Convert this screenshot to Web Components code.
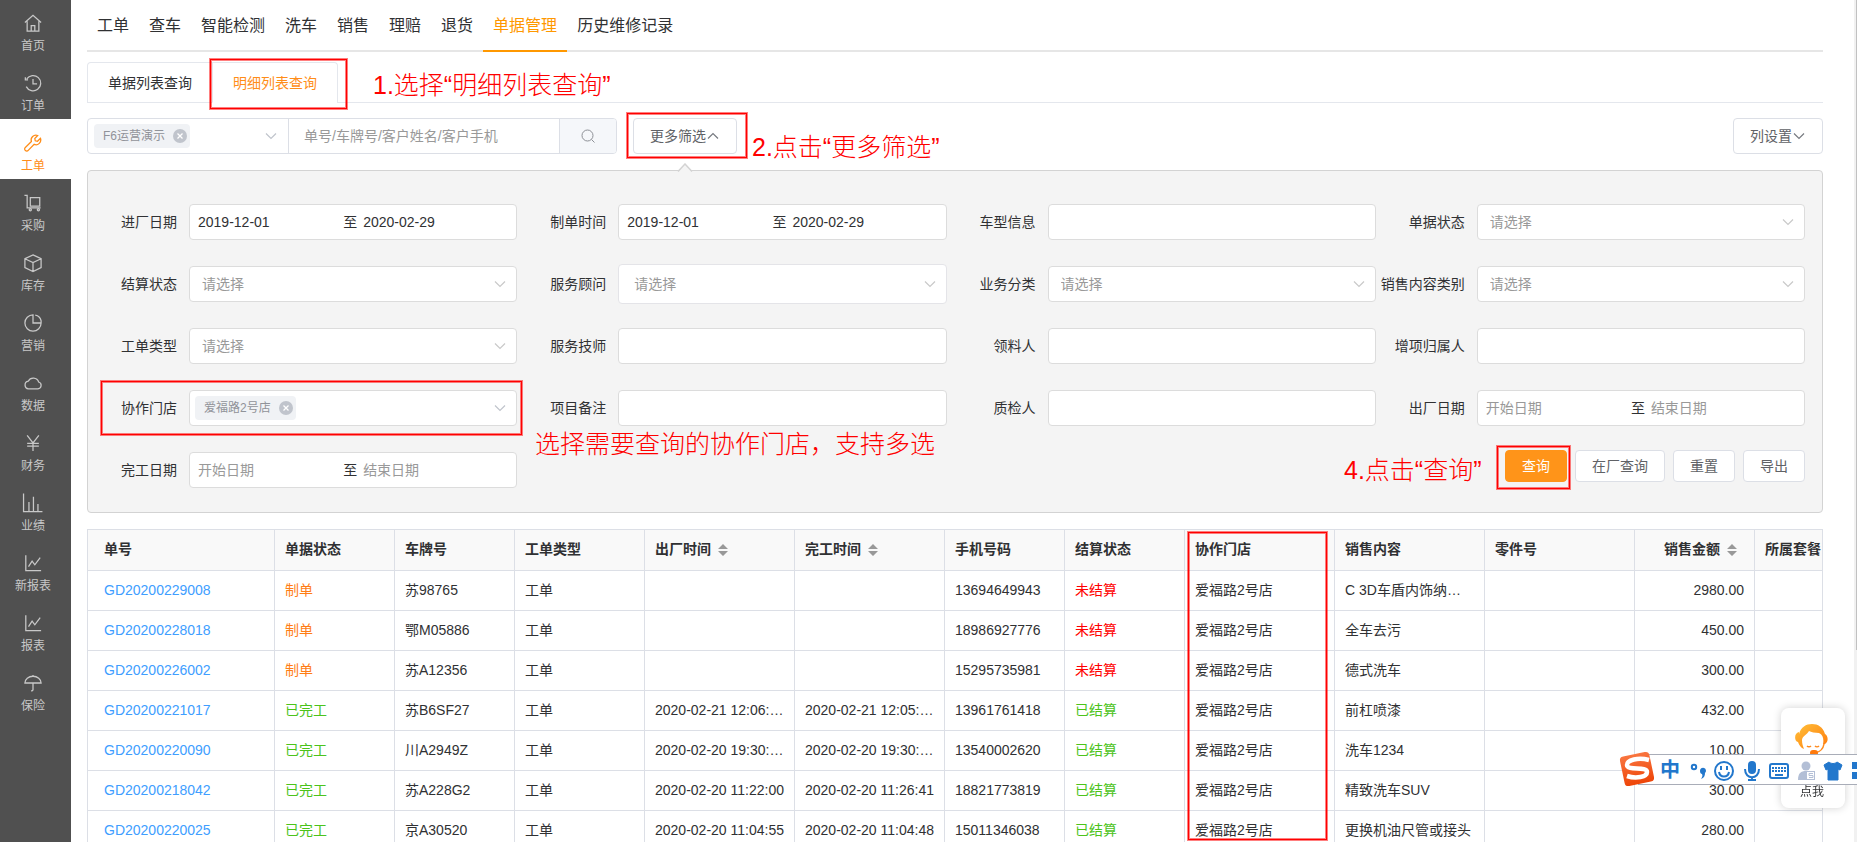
<!DOCTYPE html>
<html lang="zh-CN">
<head>
<meta charset="utf-8">
<title>单据管理</title>
<style>
html, body { margin: 0; height: 100%; }
body { font: 14px/20px "Liberation Sans", "Noto Sans CJK SC", sans-serif; color: #303133; background: #fff; overflow: hidden; }
</style>
</head>
<body>
<app-shell></app-shell>
<script>
const BASE = `*,*::before,*::after{box-sizing:border-box}
button,input,select{font:inherit;color:inherit;margin:0}
input,select{min-width:0;border:0;background:none;outline:0;padding:0}
input::placeholder{color:#999;opacity:1}
a{color:inherit;text-decoration:none}
svg{display:block;flex:none}`;

function define(name, css, render) {
  customElements.define(name, class extends HTMLElement {
    connectedCallback() {
      if (this.shadowRoot) return;
      this.attachShadow({ mode: "open" }).innerHTML = `<style>${BASE}${css}</style>${render(this)}`;
    }
  });
}

const chevron = (dir, color) => `<svg width="14" height="14" viewBox="0 0 14 14" fill="none" stroke="${color}" stroke-width="1.2" aria-hidden="true"><path d="${dir === "up" ? "M2 9.5 7 4.5l5 5" : "M2 4.5l5 5 5-5"}"/></svg>`;

/* Tutorial marks */
define("mark-frame", `:host{display:block;position:absolute;pointer-events:none;z-index:3;border:1px solid #f00;box-shadow:0 0 0 1px rgba(255,0,0,.5),inset 0 0 0 1px rgba(255,0,0,.5)}`, () => "");
define("mark-note", `:host{display:block;position:absolute;z-index:3;pointer-events:none;white-space:nowrap;color:#f00;font-size:25px;line-height:32px;font-weight:300}`, () => `<slot></slot>`);

/* Sidebar */
const ICONS = {
  home: `<path d="M1 9.500 10 1.500l9 8M3.500 8v11h13V8M8 19v-6h4v6"/>`,
  order: `<path d="M3 5.500A8.500 8.500 0 1 1 2.500 14M10 5.500V11h4.500M1.500 3.500v3h3"/>`,
  wrench: `<path d="M18.300 4.800 15 8l-2.500-.5-.5-2.500 3.200-3.300a5.300 5.300 0 0 0-7 6.600L1.500 15a2 2 0 0 0 0 3.200 2 2 0 0 0 3.200 0l6.600-6.700a5.300 5.300 0 0 0 7-6.700z"/>`,
  cart: `<path d="M.5 1.500h3v14h15M7 4h10.500v9.500H7z"/><circle cx="7" cy="17.500" r="1.200"/><circle cx="16" cy="17.500" r="1.200"/>`,
  box: `<path d="M10 1l9 4.300v9.700l-9 4.500L1 15V5.300zM1 5.300l9 4.200 9-4.200M10 9.500v10"/>`,
  pie: `<path d="M10 1a9 9 0 1 0 9 9h-9zM12.500 1.300A8 8 0 0 1 19 7.500V10"/>`,
  cloud: `<path d="M5 16.500h10.500a3.900 3.900 0 0 0 .8-7.600A6.300 6.300 0 0 0 4.700 8a4.300 4.300 0 0 0 .3 8.500z"/>`,
  yen: `<path d="M3.500 1.500l6.500 8.500 6.500-8.500M10 10v9M3.500 10.500h13M3.500 13.500h13"/>`,
  bars: `<path d="M-.5-.5v20h21M5.500 19V9M10.500 19V3M15.500 19v-8"/>`,
  chart: `<path d="M2 1.500v17h17M5 14l4-6 3 4 6-8"/>`,
  umbrella: `<path d="M1 10a9 7.500 0 0 1 18 0zM10 1v1.500M10 10v7.500a1.500 1.500 0 0 1-2 1"/>`
};
define("nav-item", `
:host{display:block;height:60px;color:#c8c8c8}
:host([active]){background:#fff;color:#ff8d18}
a{display:flex;flex-direction:column;align-items:center;height:60px;padding:15px 5px 0 0;font-size:12px;line-height:18px}
svg{margin-bottom:5px;overflow:visible}`,
  el => `<a href="#"><svg width="18" height="18" viewBox="0 0 20 20" fill="none" stroke="currentColor" stroke-width="1.400">${ICONS[el.getAttribute("icon")]}</svg><slot></slot></a>`);
define("side-nav", `:host{display:block;flex:0 0 71px;background:#505050}nav{margin-top:-1px}`, () => `<nav>${[
  ["home", "首页"], ["order", "订单"], ["wrench", "工单", 1], ["cart", "采购"], ["box", "库存"], ["pie", "营销"], ["cloud", "数据"],
  ["yen", "财务"], ["bars", "业绩"], ["chart", "新报表"], ["chart", "报表"], ["umbrella", "保险"]
].map(([i, t, a]) => `<nav-item icon="${i}"${a ? " active" : ""}>${t}</nav-item>`).join("")}</nav>`);

/* Module navigation */
define("module-nav", `
:host{display:block;border-bottom:2px solid #e6e6e6}
nav{display:flex;margin-bottom:-2px}
a{padding:0 10px;height:52px;font-size:16px;line-height:52px;border-bottom:2px solid transparent}
a.on{color:#ff9800;border-color:#ff9800}`,
  () => `<nav>${["工单", "查车", "智能检测", "洗车", "销售", "理赔", "退货", "单据管理", "历史维修记录"].map(t => `<a href="#"${t === "单据管理" ? ' class="on" aria-current="page"' : ""}>${t}</a>`).join("")}</nav>`);

/* List tabs */
define("list-tabs", `
:host{display:flex;position:relative;margin-top:10px;border-bottom:1px solid #e4e7ed}
div{display:flex;margin-bottom:-1px;border:1px solid #e4e7ed;border-bottom:0;border-radius:4px 4px 0 0}
button{height:40px;padding:0 20px;border:0;border-bottom:1px solid #e4e7ed;background:none;line-height:38px}
button+button{border-left:1px solid #e4e7ed;border-bottom-color:#fff;color:#ff8d18}
mark-frame{left:123px;top:-3px;width:137px;height:50px}
mark-note{left:286px;top:7px}`,
  () => `<div role="tablist"><button role="tab">单据列表查询</button><button role="tab" aria-selected="true">明细列表查询</button></div>
<mark-frame></mark-frame><mark-note>1.选择“明细列表查询”</mark-note>`);

/* Tag picker */
define("tag-picker", `
:host{display:flex;align-items:center;height:34px;padding:0 10px 0 6px}
span{display:flex;align-items:center;gap:8px;height:24px;padding:0 3px 0 9px;border-radius:4px;background:#f0f2f5;color:#909399;font-size:12px;white-space:nowrap}
button{display:block;width:14px;height:14px;padding:0;border:0;background:none}
input{flex:1;width:20px}`,
  el => `<span>${el.getAttribute("tag")}<button aria-label="移除"><svg width="14" height="14" viewBox="0 0 14 14"><circle cx="7" cy="7" r="7" fill="#c0c4cc"/><path d="M4.500 4.500l5 5m0-5-5 5" stroke="#fff" stroke-width="1.300"/></svg></button></span>
<input type="text" aria-label="${el.getAttribute("label")}">${chevron("down", "#c0c4cc")}`);

/* Plain button */
define("ui-button", `
:host{display:block;flex:none}
button{display:flex;align-items:center;height:36px;padding:0 16px;border:1px solid #dcdfe6;border-radius:4px;background:#fff;color:#606266;white-space:nowrap}
:host([small]) button{height:32px}
:host([primary]) button{background:#ff9419;border-color:#ff9419;color:#fff}`,
  el => `<button><slot></slot>${el.hasAttribute("arrow") ? chevron(el.getAttribute("arrow"), "#777a80") : ""}</button>`);

define("search-bar", `
:host{display:flex;gap:16px;margin:15px 0 16px}
.group{display:flex;flex:0 1 530px;height:36px;border:1px solid #dcdfe6;border-radius:4px;overflow:hidden}
tag-picker{flex:0 0 201px;border-right:1px solid #dcdfe6}
input{flex:1;padding:0 15px}
.go{flex:0 0 57px;display:grid;place-items:center;border:0;border-left:1px solid #dcdfe6;background:#f5f7fa}
.more{position:relative}
mark-frame{left:-6px;top:-5px;width:120px;height:45px}
mark-note{left:119px;top:13px}
.end{margin-left:auto}`,
  () => `<div class="group"><tag-picker tag="F6运营演示" label="门店"></tag-picker><input type="text" aria-label="搜索" placeholder="单号/车牌号/客户姓名/客户手机">
<button class="go" aria-label="搜索"><svg width="14" height="14" viewBox="0 0 14 14" fill="none" stroke="#8d9096"><circle cx="6.500" cy="6.500" r="5.500"/><path d="M10.500 10.500l3 3"/></svg></button></div>
<div class="more"><ui-button arrow="up">更多筛选</ui-button><mark-frame></mark-frame><mark-note>2.点击“更多筛选”</mark-note></div>
<ui-button class="end" arrow="down">列设置</ui-button>`);

/* Filter field: label plus its control */
define("filter-field", `
:host{display:flex;align-items:center;position:relative;min-width:0}
label{flex:0 0 101px;padding-right:12px;text-align:right;white-space:nowrap;direction:rtl}
.box{position:relative;flex:1;min-width:0;display:flex;align-items:center;height:36px;border:1px solid #dcdcdc;border-radius:4px;background:#fff}
:host([tall]) .box{height:40px;border-color:#e4e4e8}
.box>input,select{flex:1;width:20px;height:34px}
.text input{padding:0 12px}
select{appearance:none;padding:0 12px;color:#999}
:host([tall]) select{padding-left:15px}
.pick svg{position:absolute;right:9px;pointer-events:none}
.date{padding:0 8px}
.date span{margin-right:6px}
tag-picker{flex:1;padding:0 9px 0 5px}
mark-frame{left:13px;top:-9px;right:-5px;bottom:-9px}
mark-note{left:447px;top:38px}`,
  el => {
    const label = el.getAttribute("label"), kind = el.getAttribute("kind"), v = (el.getAttribute("value") || "").split(",");
    const body = {
      text: () => `<input id="f" type="text">`,
      pick: () => `<select id="f"><option>请选择</option></select>${chevron("down", "#c9c9c9")}`,
      date: () => `<input id="f" type="text" placeholder="开始日期" value="${v[0]}"><span>至</span><input type="text" aria-label="${label}结束" placeholder="结束日期" value="${v[1] || ""}">`,
      tags: () => `<tag-picker id="f" tag="${v[0]}" label="${label}"></tag-picker>`
    }[kind]();
    return `<label for="f">${label}</label><div class="box ${kind}">${body}</div>${kind === "tags" ? "<mark-frame></mark-frame><mark-note>选择需要查询的协作门店，支持多选</mark-note>" : ""}`;
  });

define("filter-panel", `
:host{display:grid;position:relative;grid-template-columns:repeat(4,minmax(0,1fr));grid-auto-rows:62px;align-items:center;padding:20px 17px 11px 0;border:1px solid #d3d3d3;border-radius:4px;background:#f4f4f4}
.tip{position:absolute;left:589px;top:-8px}
.actions{position:relative;grid-column:4;display:flex;justify-content:flex-end;gap:8px;margin-bottom:8px}
.search{position:relative}
mark-frame{left:-8px;top:-4px;width:73px;height:43px}
mark-note{left:-161px;top:4px}`,
  () => {
    const D = "2019-12-01,2020-02-29";
    return `<svg class="tip" width="16" height="9" viewBox="0 0 16 9"><path d="M1 8.500 8 1l7 7.500" fill="#f4f4f4" stroke="#d3d3d3" stroke-width="1.500"/></svg>` + [
      ["进厂日期", "date", D], ["制单时间", "date", D], ["车型信息", "text"], ["单据状态", "pick"],
      ["结算状态", "pick"], ["服务顾问", "pick", "", "tall"], ["业务分类", "pick"], ["销售内容类别", "pick"],
      ["工单类型", "pick"], ["服务技师", "text"], ["领料人", "text"], ["增项归属人", "text"],
      ["协作门店", "tags", "爱福路2号店"], ["项目备注", "text"], ["质检人", "text"], ["出厂日期", "date"], ["完工日期", "date"]
    ].map(([l, k, v = "", x = ""]) => `<filter-field label="${l}" kind="${k}" value="${v}" ${x}></filter-field>`).join("") +
      `<div class="actions"><div class="search"><ui-button small primary>查询</ui-button><mark-frame></mark-frame><mark-note>4.点击“查询”</mark-note></div><ui-button small>在厂查询</ui-button><ui-button small>重置</ui-button><ui-button small>导出</ui-button></div>`;
  });

/* Orders */
define("order-table", `
:host{display:block;position:relative;margin-top:16px;border:1px solid #dcdfe6;border-width:1px 1px 0;overflow:hidden}
table{border-collapse:separate;border-spacing:0;table-layout:fixed;width:1787px}
th,td{height:40px;padding:0 10px 2px;border-right:1px solid #dcdfe6;border-bottom:1px solid #dcdfe6;text-align:left;white-space:nowrap;overflow:hidden;text-overflow:ellipsis}
th{height:41px;background:#f9f9f9;font-weight:700}
th svg{display:inline-block;vertical-align:-2px;margin:0 7px}
th:first-child,td:first-child{padding-left:16px}
.num{text-align:right}
.num svg{margin-right:7px}
.link{color:#409eff}.make{color:#ff7d14}.done{color:#4cc31a}.due{color:#f00}
mark-frame{left:1100px;top:2px;width:139px;height:308px}`,
  () => {
    const sort = `<svg width="10" height="12" viewBox="0 0 10 12" fill="#999"><path d="M0 5l5-5 5 5zM0 7h10l-5 5z"/></svg>`;
    const cols = [["单号", 187], ["单据状态", 120], ["车牌号", 120], ["工单类型", 130], ["出厂时间", 150, 1], ["完工时间", 150, 1], ["手机号码", 120], ["结算状态", 120], ["协作门店", 150], ["销售内容", 150], ["零件号", 150], ["销售金额", 120, 1], ["所属套餐", 120]];
    const rows = [
      ["GD20200229008", 0, "苏98765", "", "", "13694649943", "C 3D车盾内饰纳…", "2980.00"],
      ["GD20200228018", 0, "鄂M05886", "", "", "18986927776", "全车去污", "450.00"],
      ["GD20200226002", 0, "苏A12356", "", "", "15295735981", "德式洗车", "300.00"],
      ["GD20200221017", 1, "苏B6SF27", "2020-02-21 12:06:…", "2020-02-21 12:05:…", "13961761418", "前杠喷漆", "432.00"],
      ["GD20200220090", 1, "川A2949Z", "2020-02-20 19:30:…", "2020-02-20 19:30:…", "13540002620", "洗车1234", "10.00"],
      ["GD20200218042", 1, "苏A228G2", "2020-02-20 11:22:00", "2020-02-20 11:26:41", "18821773819", "精致洗车SUV", "30.00"],
      ["GD20200220025", 1, "京A30520", "2020-02-20 11:04:55", "2020-02-20 11:04:48", "15011346038", "更换机油尺管或接头", "280.00"]
    ];
    return `<table><colgroup>${cols.map(c => `<col style="width:${c[1]}px">`).join("")}</colgroup>
<thead><tr>${cols.map(c => `<th${c[0] === "销售金额" ? ' class="num"' : ""}>${c[0]}${c[2] ? sort : ""}</th>`).join("")}</tr></thead>
<tbody>${rows.map(([id, done, plate, out, fin, tel, item, sum]) => `<tr><td><a class="link" href="#">${id}</a></td><td class="${done ? "done" : "make"}">${done ? "已完工" : "制单"}</td><td>${plate}</td><td>工单</td><td>${out}</td><td>${fin}</td><td>${tel}</td><td class="${done ? "done" : "due"}">${done ? "已结算" : "未结算"}</td><td>爱福路2号店</td><td>${item}</td><td></td><td class="num">${sum}</td><td></td></tr>`).join("")}</tbody></table><mark-frame></mark-frame>`;
  });

/* Floating help card */
define("help-card", `
:host{display:block;position:fixed;right:12px;bottom:34px;z-index:4}
button{display:flex;flex-direction:column;align-items:center;justify-content:space-between;width:64px;height:100px;padding:14px 2px 6px 0;border:0;border-radius:8px;background:#fff;box-shadow:0 0 8px rgba(0,0,0,.18);font-size:12px;line-height:20px}`,
  () => `<button><svg width="34" height="34" viewBox="0 0 34 34"><defs><linearGradient id="g" x2="1" y2="1"><stop stop-color="#ffc13a"/><stop offset="1" stop-color="#ff7a0c"/></linearGradient></defs>
<path d="M4 12C6 5 11 2 17 2s11 3 13 10c3 1 4 8 0 10h-2c1-5 0-9-4-11-4 0-8-1-10-2-2 4-7 5-7 9 0 4 1 6 2 9-3-1-5-4-6-7-4-1-4-9 1-10z" fill="url(#g)"/><path d="M12 24c1 1 3 1 4 0M20 24c1 1 3 1 4 0M29 22c-1 6-4 8-9 9" fill="none" stroke="#ff8a1c" stroke-width="1.500"/><rect x="15" y="28" width="8" height="6" rx="3" fill="#ff7a0c"/></svg>点我</button>`);

/* Input method toolbar */
define("ime-bar", `
:host{display:flex;align-items:center;position:fixed;right:0;bottom:57px;z-index:5;width:219px;height:31px;background:#fff;border:1px solid #a9adb8;border-width:1px 0;color:#2277cc;overflow:visible}
.logo{position:absolute;left:-20px;top:-5px}
b{margin-left:22px;width:20px;font-size:20px;line-height:28px}
svg.set{margin:2px 0 0 10px}`,
  () => `<svg class="logo" width="38" height="38" viewBox="0 0 38 38"><defs><linearGradient id="s" y2="1" x2="0"><stop stop-color="#f9753f"/><stop offset="1" stop-color="#ee4508"/></linearGradient></defs><rect x="4" y="4" width="30" height="30" rx="4" fill="url(#s)" transform="rotate(-12 19 19)"/><path d="M31 10C20 7 9 10 9 15c0 6 20 1 20 7 0 5-11 7-20 4" fill="none" stroke="#fff" stroke-width="4.500"/></svg>
<b>中</b><svg class="set" width="167" height="28" viewBox="0 0 167 28" fill="none" stroke="#2277cc" stroke-width="2">
<circle cx="4" cy="10" r="2.200"/><path d="M10 14a3 3 0 1 1 5 2c0 3-1 5-4 6 1-2 2-3 1-5-1 0-2-1-2-3z" fill="#2277cc" stroke="none"/>
<circle cx="34" cy="14" r="9"/><path d="M29 15c1 6 9 6 10 0M31 9v4M37 9v4"/>
<rect x="58" y="4" width="8" height="13" rx="4" fill="#2277cc" stroke="none"/><path d="M55 12c0 11 14 11 14 0M62 20v3M58 23h8"/>
<rect x="80" y="7" width="18" height="14" rx="2"/><path d="M82 11h14M82 14h14" stroke-dasharray="2 1"/><path d="M85 18h8"/>
<g fill="#b3bfd6" stroke="none"><circle cx="116" cy="9" r="4.500"/><path d="M108 23c0-7 3-9 8-9s8 2 8 9z"/></g><rect x="116.500" y="14.500" width="8" height="8" fill="#fff" stroke="#b3bfd6" stroke-width="1"/><path d="M123 16.500h-4v2h4v2h-4" stroke="#b3bfd6" stroke-width="1"/>
<path d="M139 5c2 2 6 2 8 0l5 3-2 5-2-1v11h-10V12l-2 1-2-5z" fill="#2277cc" stroke="#2277cc" stroke-width="1"/>
<path d="M162 5h8v7h-8zM162 15h8v7h-8z" fill="#2277cc" stroke="none"/></svg>`);

define("app-shell", `
:host{display:flex;position:relative;height:100vh;overflow:hidden}
main{flex:1;min-width:0;padding:0 34px 0 16px;overflow:hidden}
.track{position:absolute;right:0;top:0;bottom:0;width:3px;background:#f1f1f1}
.track i{display:block;width:1px;height:650px;margin-left:2px;background:#c1c1c1}`,
  () => `<side-nav></side-nav><main><module-nav></module-nav><list-tabs></list-tabs><search-bar></search-bar><filter-panel></filter-panel><order-table></order-table></main>
<div class="track"><i></i></div><help-card></help-card><ime-bar></ime-bar>`);
</script>
</body>
</html>
